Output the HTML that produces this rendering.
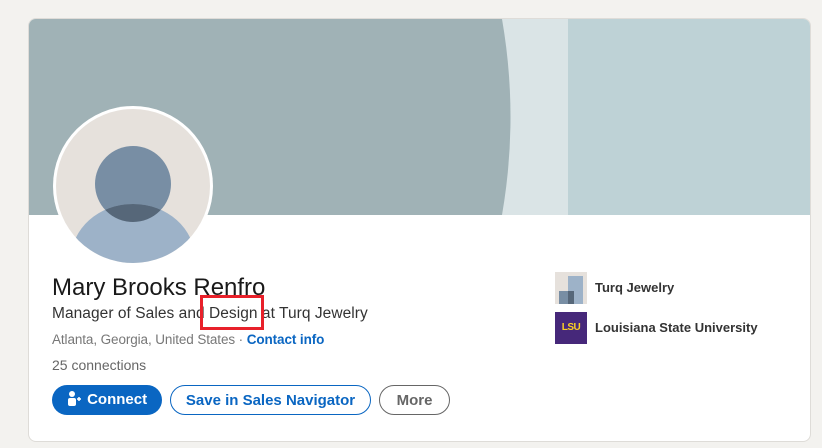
<!DOCTYPE html>
<html><head><style>
body{margin:0;width:822px;height:448px;background:#f3f2ef;font-family:"Liberation Sans",sans-serif;position:relative;overflow:hidden}
.card{position:absolute;left:28px;top:18px;width:781px;height:422px;background:#fff;border:1px solid #dedcd8;border-radius:8px;overflow:hidden}
.banner{position:absolute;left:0;top:0;width:782px;height:196px;background:#bed2d6}
.abs{position:absolute}
.t{position:absolute;white-space:nowrap}
.btn{position:absolute;top:366px;height:30px;border-radius:16px;font-size:15px;font-weight:bold;line-height:30px;text-align:center;box-sizing:border-box}
</style></head><body>
<div class="card">
 <div class="banner">
  <svg width="782" height="196" class="abs" style="left:0;top:0">
   <rect x="0" y="0" width="539" height="196" fill="#dae4e6"/>
   <path d="M0 0 H473 Q490 98 473 196 H0 Z" fill="#a0b2b6"/>
  </svg>
 </div>
 <svg class="abs" style="left:22px;top:85px" width="164" height="164">
  <defs><clipPath id="c"><circle cx="82" cy="82" r="77"/></clipPath><clipPath id="h"><circle cx="82" cy="80" r="38"/></clipPath></defs>
  <circle cx="82" cy="82" r="80" fill="#fff"/>
  <circle cx="82" cy="82" r="77" fill="#e6e1dc"/>
  <g clip-path="url(#c)">
   <circle cx="82" cy="80" r="38" fill="#788ea4"/>
   <ellipse cx="82" cy="155" rx="62" ry="55" fill="#9db2c8"/>
   <ellipse cx="82" cy="155" rx="62" ry="55" fill="#566779" clip-path="url(#h)"/>
  </g>
 </svg>
 <div class="t" style="left:23px;top:255px;font-size:24px;color:#191919">Mary Brooks Renfro</div>
 <div class="t" style="left:23px;top:286px;font-size:15.5px;color:#333;letter-spacing:0.05px">Manager of Sales and Design at Turq Jewelry</div>
 <div class="abs" style="left:171px;top:276px;width:58px;height:29px;border:3px solid #e8202a"></div>
 <div class="t" style="left:23px;top:313px;font-size:13.5px;color:#777;letter-spacing:-0.1px">Atlanta, Georgia, United States · <span style="color:#0a66c2;font-weight:bold">Contact info</span></div>
 <div class="t" style="left:23px;top:338px;font-size:14px;color:#666">25 connections</div>
 <div class="btn" style="left:23px;width:110px;background:#0a66c2;color:#fff">
  <svg width="16" height="16" style="vertical-align:-2px"><circle cx="5" cy="4" r="3" fill="#fff"/><rect x="1" y="8" width="8" height="8" rx="2" fill="#fff"/><path d="M10 9h4M12 7v4" stroke="#fff" stroke-width="1.5"/></svg> Connect</div>
 <div class="btn" style="left:141px;width:201px;border:1px solid #0a66c2;color:#0a66c2">Save in Sales Navigator</div>
 <div class="btn" style="left:350px;width:71px;border:1px solid #666;color:#666">More</div>
 <svg class="abs" style="left:526px;top:253px" width="32" height="32"><rect width="32" height="32" fill="#e6e1dc"/><rect x="13" y="4" width="15" height="28" fill="#9db2c8"/><rect x="4" y="19" width="15" height="13" fill="#788ea4"/><rect x="13" y="19" width="6" height="13" fill="#566779"/></svg>
 <div class="t" style="left:566px;top:261px;font-size:13px;font-weight:bold;color:#333">Turq Jewelry</div>
 <div class="abs" style="left:526px;top:293px;width:32px;height:32px;background:#46287a;color:#fdd023;font-size:10px;font-weight:bold;line-height:32px;text-align:center;letter-spacing:-0.5px">LSU</div>
 <div class="t" style="left:566px;top:301px;font-size:13px;font-weight:bold;color:#333">Louisiana State University</div>
</div>
</body></html>
